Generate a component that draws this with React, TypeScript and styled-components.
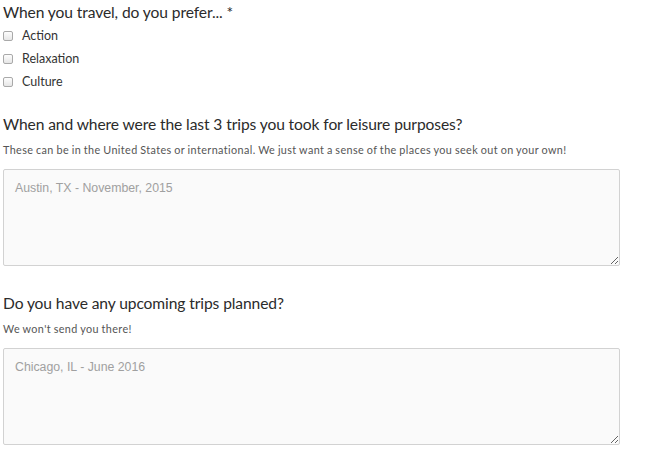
import styled, { createGlobalStyle } from "styled-components";

const GlobalStyle = createGlobalStyle`
  body {
    margin: 0;
    background: #fff;
    font-family: Lato, "Open Sans", sans-serif;
    color: #333;
  }
`;

const Form = styled.form`
  display: flex;
  flex-direction: column;
  padding: 2px 0 0 3px;
  width: 617px;
`;

const Question = styled.fieldset<{ $space: number }>`
  border: 0;
  margin: 0 0 ${({ $space }) => $space}px;
  padding: 0;
  display: flex;
  flex-direction: column;
`;

const Title = styled.legend`
  padding: 0;
  font-size: 15.6px;
  line-height: 20px;
  color: #2b2b2b;
  letter-spacing: -0.1px;
  margin-bottom: 2px;
`;

const Hint = styled.p`
  margin: 7px 0 12px;
  font-size: 10.8px;
  line-height: 14px;
  color: #555;
  letter-spacing: 0.4px;
  word-spacing: -0.5px;
`;

const Options = styled.div`
  display: flex;
  flex-direction: column;
`;

const Option = styled.label`
  display: flex;
  align-items: center;
  gap: 9px;
  height: 23px;
  font-size: 12.5px;
  color: #333;
`;

const Box = styled.input`
  margin: 0;
  width: 10px;
  height: 10px;
  appearance: none;
  border: 1px solid #a9a9a9;
  border-radius: 2px;
  background: linear-gradient(#fdfdfd, #e6e6e6);
`;

const Area = styled.textarea<{ $rows: number }>`
  box-sizing: border-box;
  width: 617px;
  height: ${({ $rows }) => $rows}px;
  border: 1px solid #d2d2d2;
  border-radius: 2px;
  background: #fafafa;
  padding: 11px 11px;
  font-family: "Liberation Sans", Arial, sans-serif;
  font-size: 12.3px;
  resize: vertical;
  &::placeholder {
    color: #a0a0a0;
  }
`;

export default function App() {
  return (
    <>
      <GlobalStyle />
      <Form>
        <Question $space={21}>
          <Title>When you travel, do you prefer... *</Title>
          <Options>
            {["Action", "Relaxation", "Culture"].map((o) => (
              <Option key={o}>
                <Box type="checkbox" />
                {o}
              </Option>
            ))}
          </Options>
        </Question>
        <Question $space={27}>
          <Title>When and where were the last 3 trips you took for leisure purposes?</Title>
          <Hint>
            These can be in the United States or international. We just want a sense of the places you seek out on your own!
          </Hint>
          <Area $rows={97} placeholder="Austin, TX - November, 2015" />
        </Question>
        <Question $space={27}>
          <Title>Do you have any upcoming trips planned?</Title>
          <Hint>We won't send you there!</Hint>
          <Area $rows={97} placeholder="Chicago, IL - June 2016" />
        </Question>
      </Form>
    </>
  );
}
